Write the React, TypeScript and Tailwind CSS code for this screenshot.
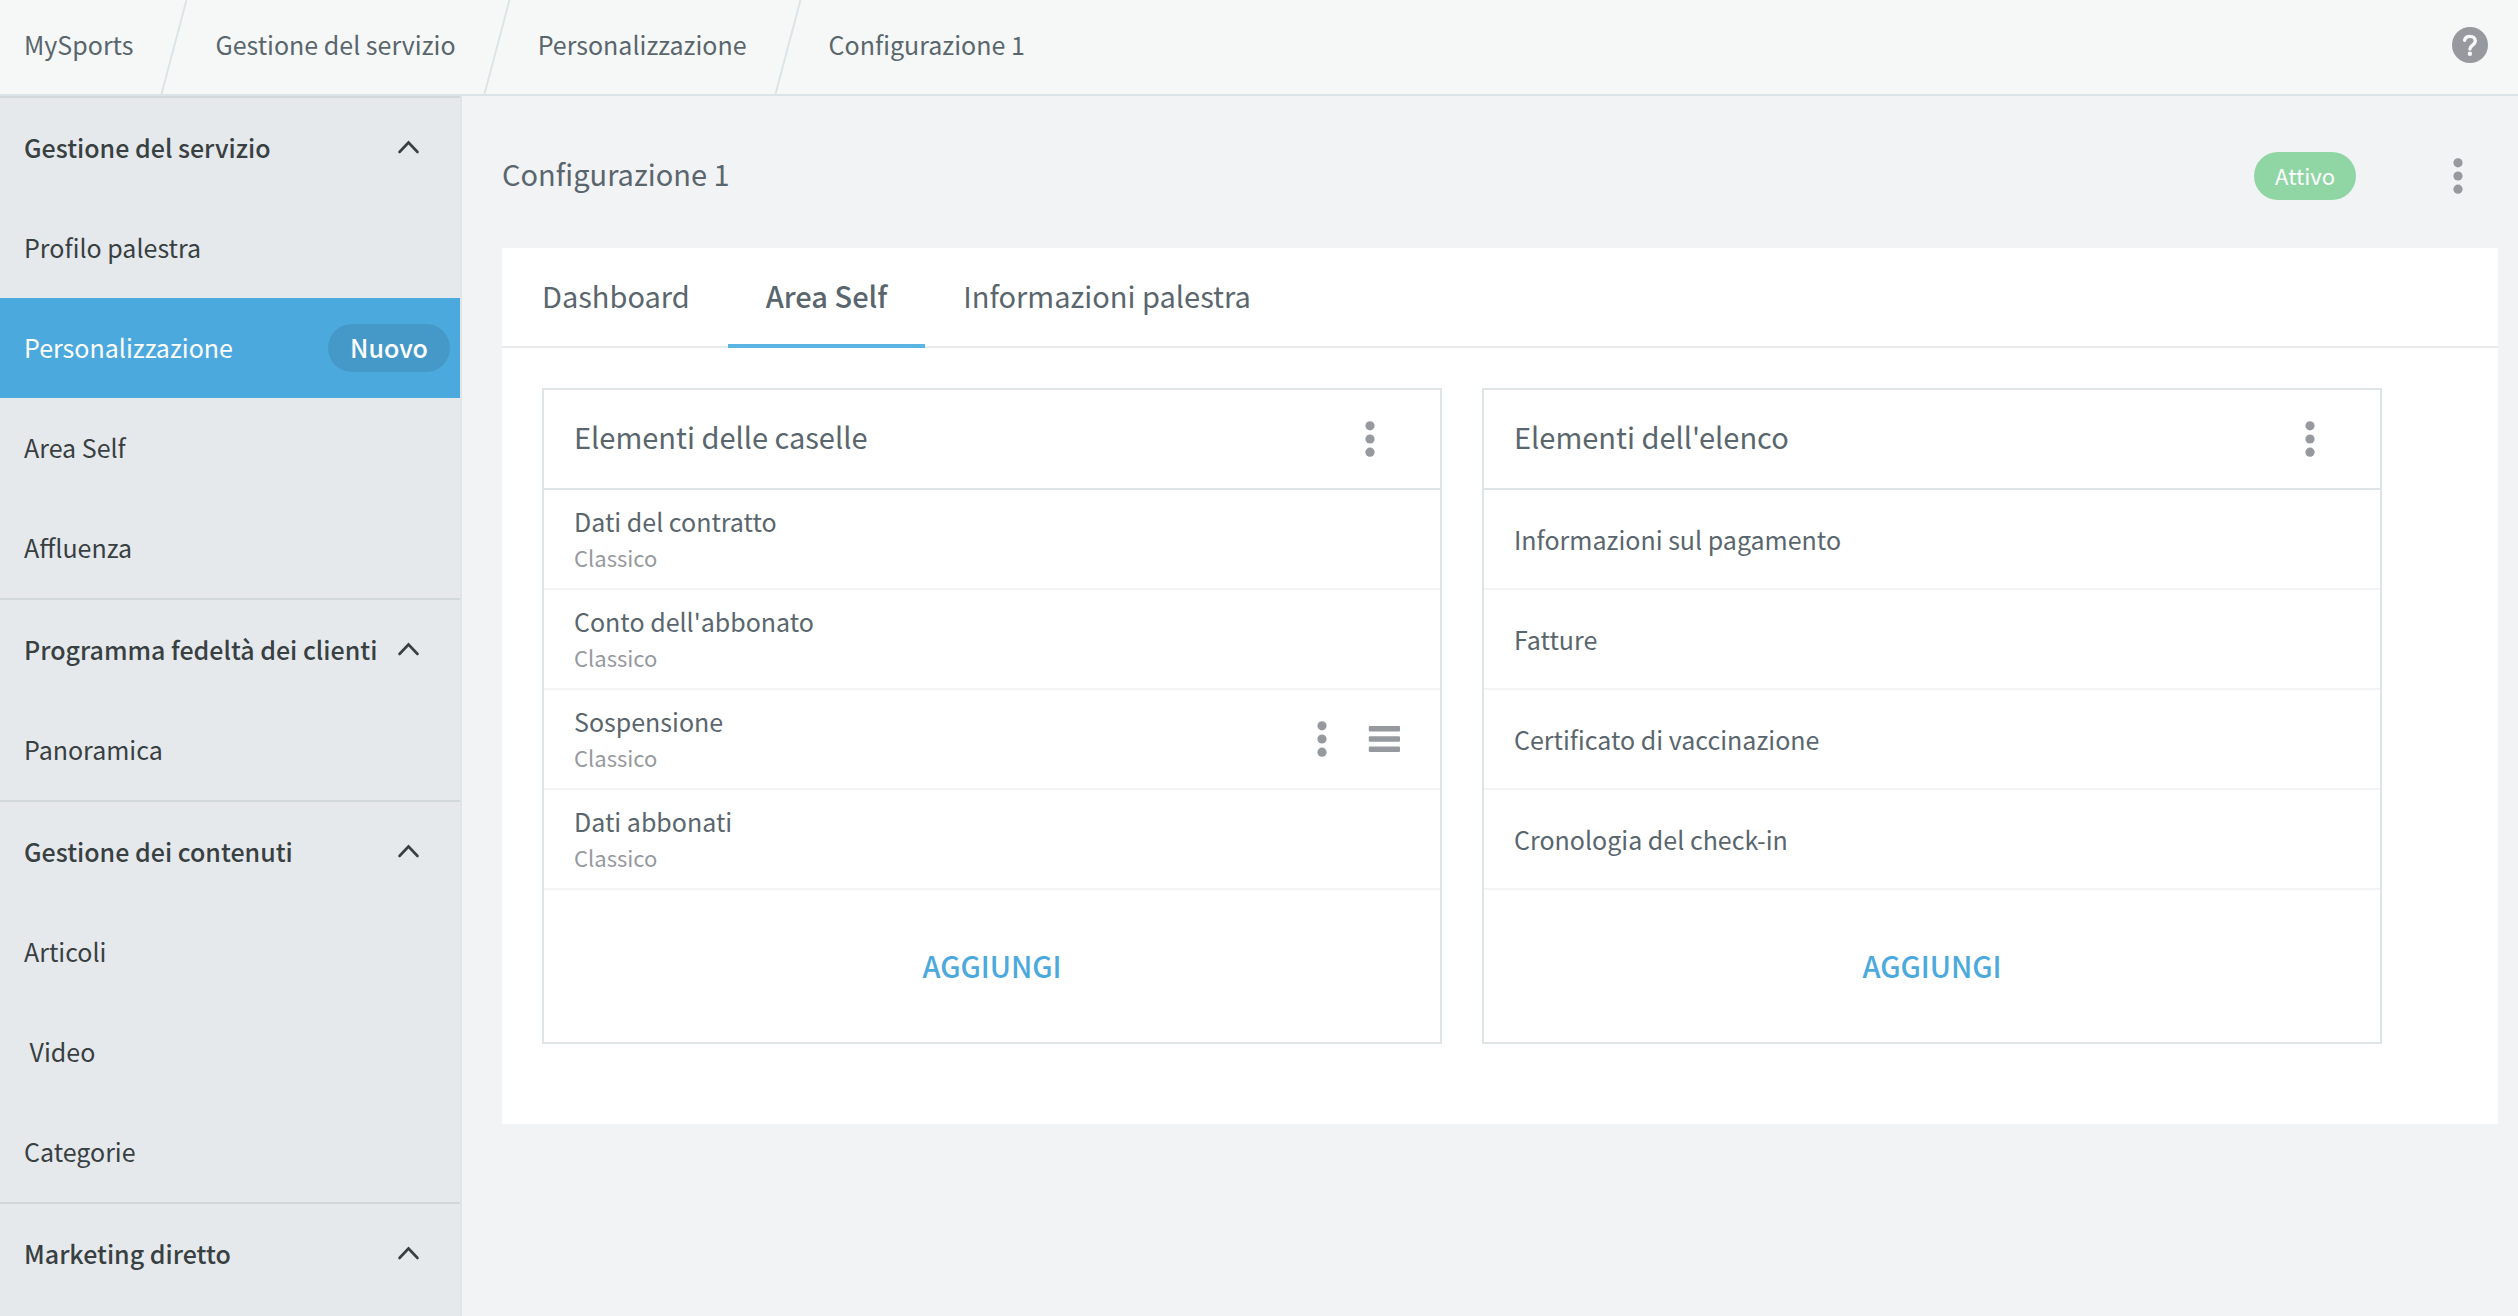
import type { ReactNode } from "react";

function DotsIcon() {
  return (
    <svg viewBox="0 0 36 36" className="size-9 fill-[#96999e]" aria-hidden="true">
      <circle cx="18" cy="4.8" r="4.6" />
      <circle cx="18" cy="18" r="4.6" />
      <circle cx="18" cy="31.2" r="4.6" />
    </svg>
  );
}

function BarsIcon() {
  return (
    <svg viewBox="0 0 32 32" className="size-8 fill-[#96999e]" aria-hidden="true">
      <rect x="0.8" y="3" width="31.2" height="5.4" rx="1" />
      <rect x="0.8" y="13.3" width="31.2" height="5.4" rx="1" />
      <rect x="0.8" y="23.6" width="31.2" height="5.4" rx="1" />
    </svg>
  );
}

function ChevronUpIcon() {
  return (
    <svg viewBox="0 0 24 24" className="mb-0.5 size-6 shrink-0" fill="none" stroke="#384042" strokeWidth="2.6" aria-hidden="true">
      <path d="M3.500 17 12.500 7.500 21.500 17" strokeLinecap="round" />
    </svg>
  );
}

function HelpIcon() {
  return (
    <svg viewBox="0 0 36 36" className="size-9" aria-hidden="true">
      <circle cx="18" cy="18" r="18" fill="#96999e" />
      <path
        d="M12.6 13.4c.5-2.700 2.600-4 5.300-4 3.100 0 5.400 1.800 5.400 4.500 0 4-5.400 4.300-5.400 8.100"
        fill="none"
        stroke="#f5f8f7"
        strokeWidth="3.400"
        strokeLinecap="round"
      />
      <circle cx="17.900" cy="26.700" r="2.200" fill="#f5f8f7" />
    </svg>
  );
}

const crumbs = ["MySports", "Gestione del servizio", "Personalizzazione", "Configurazione 1"];

function Breadcrumbs() {
  return (
    <nav aria-label="Breadcrumb">
      <ol className="flex items-center">
        {crumbs.map((label, i) => (
          <li key={label} className="flex items-center">
            {i > 0 && (
              <svg viewBox="0 0 28 94" className="mx-[27px] h-[94px] w-7" aria-hidden="true">
                <path d="M1.500 94 26.500 0" stroke="#dde4e7" strokeWidth="2" />
              </svg>
            )}
            <a href="#" className="pb-1">
              {label}
            </a>
          </li>
        ))}
      </ol>
    </nav>
  );
}

type Entry = { label: string; active?: boolean; badge?: string };

const sections: { title: string; items: Entry[] }[] = [
  {
    title: "Gestione del servizio",
    items: [
      { label: "Profilo palestra" },
      { label: "Personalizzazione", active: true, badge: "Nuovo" },
      { label: "Area Self" },
      { label: "Affluenza" },
    ],
  },
  { title: "Programma fedeltà dei clienti", items: [{ label: "Panoramica" }] },
  {
    title: "Gestione dei contenuti",
    items: [{ label: "Articoli" }, { label: "\u00a0Video" }, { label: "Categorie" }],
  },
  { title: "Marketing diretto", items: [] },
];

function Sidebar() {
  return (
    <nav
      aria-label="Menu"
      className="w-[462px] shrink-0 border-r-2 border-[#dfe4e7] bg-[#e5e9ec] text-[25px] text-[#384042]"
    >
      {sections.map((section) => (
        <section key={section.title} className="border-t-2 border-[#d1d8db]">
          <button
            type="button"
            aria-expanded="true"
            className="flex h-[100px] w-full items-center justify-between pr-10 pl-6 font-medium whitespace-nowrap"
          >
            {section.title}
            <ChevronUpIcon />
          </button>
          {section.items.map((item) => (
            <a
              key={item.label}
              href="#"
              aria-current={item.active ? "page" : undefined}
              className={
                item.active
                  ? "flex h-[100px] items-center justify-between bg-[#4ca9de] pr-[10px] pl-6 text-white"
                  : "flex h-[100px] items-center pl-6"
              }
            >
              {item.label}
              {item.badge && (
                <span className="flex h-12 items-center rounded-full bg-[#4499c8] px-[22px] font-medium">
                  {item.badge}
                </span>
              )}
            </a>
          ))}
        </section>
      ))}
    </nav>
  );
}

const tabs = ["Dashboard", "Area Self", "Informazioni palestra"];

function Tabs() {
  return (
    <div role="tablist" className="flex h-[100px] border-b-2 border-[#e8eaeb] text-[29px]">
      {tabs.map((label) => {
        const selected = label === "Area Self";
        return (
          <button
            key={label}
            type="button"
            role="tab"
            aria-selected={selected}
            className={
              selected
                ? "-mb-0.5 border-b-4 border-[#5bb5e3] px-[38px] font-medium"
                : "-mb-0.5 border-b-4 border-transparent px-[38px] first:pl-10"
            }
          >
            {label}
          </button>
        );
      })}
    </div>
  );
}

type Row = { label: string; note?: string; actions?: boolean };

function Card({ title, rows }: { title: string; rows: Row[] }) {
  return (
    <section className="min-w-0 flex-1 border-2 border-[#dfe4e7]">
      <header className="flex h-[100px] items-center justify-between border-b-2 border-[#dfe4e7] pr-[52px] pl-[30px]">
        <h2 className="pb-1 text-[29px]">{title}</h2>
        <IconButton label={"Opzioni " + title}>
          <DotsIcon />
        </IconButton>
      </header>
      <ul>
        {rows.map((row) => (
          <li
            key={row.label}
            className="flex h-[100px] items-center justify-between border-b-2 border-[#f1f3f4] pr-10 pl-[30px]"
          >
            <div>
              <p className="text-[25px] leading-9">{row.label}</p>
              {row.note && <p className="text-[22px] leading-9 text-[#96999e]">{row.note}</p>}
            </div>
            {row.actions && (
              <div className="flex items-center gap-7">
                <IconButton label={"Opzioni " + row.label}>
                  <DotsIcon />
                </IconButton>
                <IconButton label={"Sposta " + row.label}>
                  <BarsIcon />
                </IconButton>
              </div>
            )}
          </li>
        ))}
      </ul>
      <button type="button" className="h-[152px] w-full text-[29px] font-medium text-[#4ca9de]">
        AGGIUNGI
      </button>
    </section>
  );
}

function IconButton({ label, children }: { label: string; children: ReactNode }) {
  return (
    <button type="button" aria-label={label} className="shrink-0">
      {children}
    </button>
  );
}

const tiles: Row[] = [
  { label: "Dati del contratto", note: "Classico" },
  { label: "Conto dell'abbonato", note: "Classico" },
  { label: "Sospensione", note: "Classico", actions: true },
  { label: "Dati abbonati", note: "Classico" },
];

const listEntries: Row[] = [
  { label: "Informazioni sul pagamento" },
  { label: "Fatture" },
  { label: "Certificato di vaccinazione" },
  { label: "Cronologia del check-in" },
];

export default function App() {
  return (
    <div className="flex h-screen flex-col overflow-hidden bg-[#f1f3f5] font-['Noto_Sans_CJK_SC',sans-serif] text-[#5a666d]">
      <header className="flex h-24 shrink-0 items-center justify-between border-b-2 border-[#dde4e7] bg-[#f5f8f7] pr-[30px] pl-6 text-[25px]">
        <Breadcrumbs />
        <div className="flex pb-1">
          <IconButton label="Aiuto">
            <HelpIcon />
          </IconButton>
        </div>
      </header>
      <div className="flex min-h-0 flex-1">
        <Sidebar />
        <main className="min-w-0 flex-1 pr-5 pl-10">
          <div className="flex h-[152px] items-center justify-between pt-2 pr-[22px]">
            <h1 className="pb-1 text-[29px]">Configurazione 1</h1>
            <div className="flex items-center gap-[84px]">
              <span className="flex h-12 items-center rounded-full bg-[#8fd6a4] px-[21px] pb-0.5 text-[22px] text-white">
                Attivo
              </span>
              <IconButton label="Opzioni configurazione">
                <DotsIcon />
              </IconButton>
            </div>
          </div>
          <div className="bg-white">
            <Tabs />
            <div className="flex items-start gap-10 pt-10 pr-[116px] pb-20 pl-10">
              <Card title="Elementi delle caselle" rows={tiles} />
              <Card title="Elementi dell'elenco" rows={listEntries} />
            </div>
          </div>
        </main>
      </div>
    </div>
  );
}
